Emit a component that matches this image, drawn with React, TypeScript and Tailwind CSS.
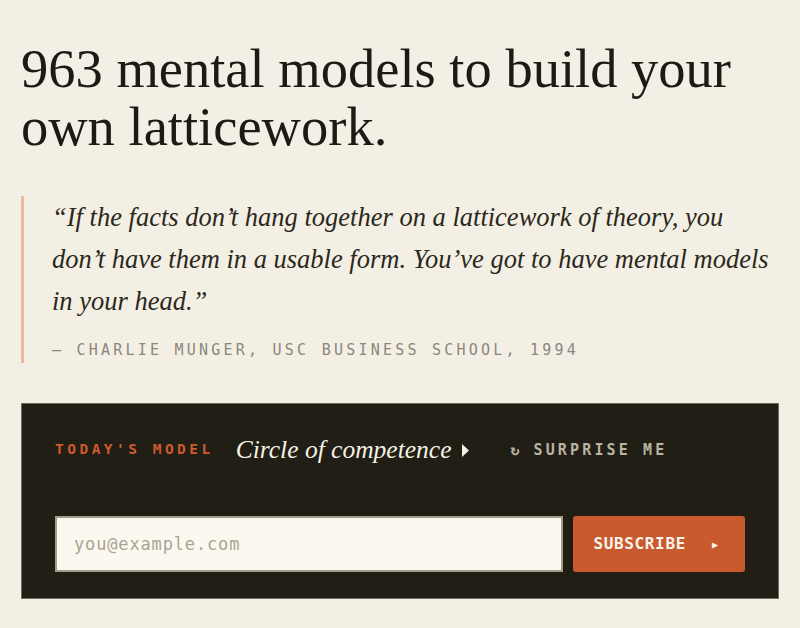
export default function App() {
  return (
    <div className="min-h-[628px] w-full bg-[#f4efe4] px-[21px] pt-[40px] text-[#1c1a14]">
      <h1 className="font-['Liberation_Serif',serif] text-[54.5px] leading-[58px]">
        963 mental models to build your
        <br />
        own latticework.
      </h1>

      <blockquote className="mt-[40px] border-l-[3px] border-[#ebb99d] pl-[28px] pb-[2px]">
        <p className="font-['Liberation_Serif',serif] text-[26.5px] italic leading-[42px] text-[#2b2820]">
          “If the facts don’t hang together on a latticework of theory, you don’t have them in a
          usable form. You’ve got to have mental models in your head.”
        </p>
        <p className="mt-[17px] font-['DejaVu_Sans_Mono',monospace] text-[15px] uppercase leading-[22px] tracking-[0.215em] text-[#8b877c]">
          — Charlie Munger, USC Business School, 1994
        </p>
      </blockquote>

      <section className="mt-[40px] border border-[#6f6a5c] bg-[#211e15] px-[33px] pt-[27px] pb-[26px]">
        <div className="flex items-center">
          <span className="font-['DejaVu_Sans_Mono',monospace] text-[14.5px] font-bold tracking-[0.24em] text-[#cf5a2d]">
            TODAY'S MODEL
          </span>
          <button className="ml-[22px] flex items-center gap-[10px] font-['Liberation_Serif',serif] text-[25.5px] italic text-[#f6f1e4]">
            Circle of competence
            <svg width="9" height="15" viewBox="0 0 9 15" className="mt-[1px]">
              <path d="M1 1 L8 7.5 L1 14 Z" fill="#f6f1e4" />
            </svg>
          </button>
          <button className="ml-[40px] flex items-center gap-[14px] font-['DejaVu_Sans_Mono',monospace] text-[15px] font-bold tracking-[0.21em] text-[#b9b3a3]">
            <span className="tracking-normal">↻</span>
            SURPRISE ME
          </button>
        </div>

        <form className="mt-[47px] flex gap-[10px]">
          <input
            placeholder="you@example.com"
            className="h-[56px] w-[510px] border-2 border-[#a39d8c] bg-[#fbf8ef] px-[17px] font-['DejaVu_Sans_Mono',monospace] text-[17px] tracking-[0.05em] text-[#2b2820] outline-none placeholder:text-[#aaa494]"
          />
          <button
            type="button"
            className="flex h-[56px] w-[172px] items-center gap-[26px] rounded-[3px] bg-[#c85a2e] pl-[20px] font-['DejaVu_Sans_Mono',monospace] text-[16px] font-bold tracking-[0.04em] text-[#fbf3ea]"
          >
            SUBSCRIBE
            <span className="text-[10px]">▶</span>
          </button>
        </form>
      </section>
    </div>
  );
}
